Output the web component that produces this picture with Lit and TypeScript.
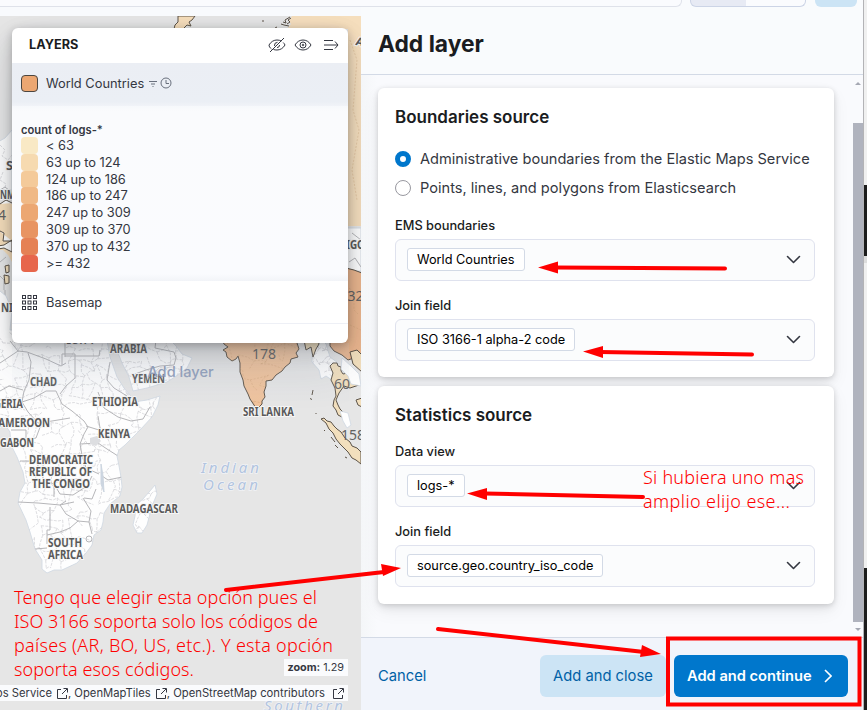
import { LitElement, html, svg, css } from "lit";
import { customElement, property } from "lit/decorators.js";

/* ---------- Map ---------- */

const AFRICA =
  "M-5 290 L0 291 L6 296 L12 310 L10 330 L60 330 L105 330 L110 357 L117 377 L124 388 L130 395 L134 402 L147 400 L160 396 L158 405 L152 417 L140 430 L125 445 L119 450 L117 456 L119 466 L121 477 L122 487 L120 496 L110 504 L104 513 L103 522 L101 530 L94 535 L92 545 L86 553 L77 563 L62 570 L54 570 L47 573 L42 569 L42 560 L35 549 L30 532 L26 520 L18 503 L20 492 L25 483 L23 472 L17 457 L11 445 L10 432 L6 426 L-5 424Z";
const ARABIA =
  "M104 330 L115 345 L122 363 L129 377 L133 391 L147 388 L167 382 L178 375 L187 368 L192 358 L182 354 L176 346 L170 340 L166 330Z";
const MADAGASCAR =
  "M155 485 L157 494 L152 506 L147 525 L142 533 L137 533 L133 525 L135 516 L136 505 L143 499 L150 491Z";
const INDIA =
  "M222 340 L224 344 L228 347 L223 350 L226 352 L227 357 L232 361 L236 359 L238 356 L240 363 L240 372 L243 380 L244 386 L248 394 L250 399 L254 405 L256 408 L258 408 L262 404 L262 401 L265 397 L264 392 L266 386 L266 381 L272 380 L276 375 L282 371 L285 367 L290 363 L291 359 L298 357 L296 353 L299 349 L296 340Z";
const SUMATRA =
  "M321 419 L324 418 L327 421 L331 422 L334 426 L337 429 L341 432 L345 438 L350 442 L352 446 L357 448 L361 452 L361 464 L356 460 L352 458 L348 452 L344 448 L340 444 L336 439 L333 433 L329 429 L326 423Z";
const THAI =
  "M330 366 L333 363 L337 363 L338 366 L341 367 L341 371 L343 374 L348 373 L352 373 L357 379 L359 385 L350 388 L344 386 L339 393 L336 400 L338 405 L340 409 L346 415 L344 418 L338 415 L336 410 L333 406 L334 400 L336 396 L335 388 L331 380 L333 373Z";
const MYANMAR =
  "M306 340 L312 349 L312 362 L319 370 L321 379 L326 376 L332 380 L334 388 L337 384 L332 370 L338 363 L330 357 L326 344 L322 340Z";

/** Faint administrative network: a jittered lattice, the same on every render. */
function lattice(x0: number, y0: number, x1: number, y1: number, step: number): string {
  let seed = 41;
  const rnd = () => ((seed = (seed * 16807) % 2147483647) / 2147483647);
  const cols = Math.ceil((x1 - x0) / step) + 1;
  const rows = Math.ceil((y1 - y0) / step) + 1;
  const pts: number[][][] = [];
  for (let r = 0; r < rows; r++) {
    pts.push([]);
    for (let c = 0; c < cols; c++)
      pts[r].push([x0 + (c + (rnd() - 0.5) * 0.9) * step, y0 + (r + (rnd() - 0.5) * 0.9) * step]);
  }
  let d = "";
  const join = (a: number[], b: number[]) => {
    const mx = (a[0] + b[0]) / 2 + (rnd() - 0.5) * 4;
    const my = (a[1] + b[1]) / 2 + (rnd() - 0.5) * 4;
    d += `M${a[0].toFixed(1)} ${a[1].toFixed(1)}L${mx.toFixed(1)} ${my.toFixed(1)}L${b[0].toFixed(1)} ${b[1].toFixed(1)}`;
  };
  for (let r = 0; r < rows; r++)
    for (let c = 0; c < cols; c++) {
      if (c + 1 < cols && rnd() > 0.35) join(pts[r][c], pts[r][c + 1]);
      if (r + 1 < rows && rnd() > 0.35) join(pts[r][c], pts[r + 1][c]);
    }
  return d;
}

const BORDERS = [
  "M10 341L18 351L27 352L46 359L61 366L66 363",
  "M65 340V357M65 356H99L100 350M62 365V354H75V378L66 386L60 394",
  "M0 363L18 351M28 353L31 362L29 380L24 391L22 402L34 398L46 391L56 391",
  "M56 391L62 404L72 411L84 421L88 427L84 434L80 444",
  "M0 391L9 386L23 390M22 402L28 412L38 423L52 421L70 418",
  "M110 362L107 380L114 388L127 396M98 392L104 408L118 417L131 421L143 419L150 407",
  "M98 416L100 428L99 440M86 426L99 430M11 430H26V440L36 438L42 422",
  "M80 444L98 443L107 449L118 456M80 444L82 455L86 468L99 474",
  "M20 461H36L44 480L54 484V497M18 502L38 503L60 505L74 502",
  "M54 484L60 494L73 495L87 486L92 476M102 476L108 480L122 477",
  "M50 507V530H47V544M60 505L66 514L78 521L89 522L91 511L83 498",
  "M89 522L92 534M47 535L60 532L70 528L78 521M35 549L47 548",
  "M96 489L92 499L84 498M60 505L66 501",
  "M120 349L122 343L136 341M135 374L146 370L160 366L174 365",
  "M156 340L155 348L174 352L176 358L174 365",
];

const LABELS: [string, number, number, number][] = [
  ["ARABIA", 110, 353, 37],
  ["CHAD", 30, 386, 27],
  ["YEMEN", 132, 383, 33],
  ["ETHIOPIA", 92, 406, 46],
  ["GERIA", -6, 408, 29],
  ["CAMEROON", -8, 427, 58],
  ["GABON", 0, 447, 34],
  ["KENYA", 98, 438, 32],
  ["DEMOCRATIC", 29, 464, 64],
  ["REPUBLIC OF", 29, 476, 63],
  ["THE CONGO", 32, 488, 58],
  ["MADAGASCAR", 110, 513, 68],
  ["SOUTH", 48, 547, 34],
  ["AFRICA", 48, 559, 35],
  ["SRI LANKA", 243, 416, 51],
  ["NM", 0, 199, 15],
  ["NI", 1, 312, 12],
  ["S", 6, 170, 7],
  ["IGO", 346, 249, 19],
  ["EGYPT", 66, 344, 29],
];

@customElement("world-map")
class WorldMap extends LitElement {
  static styles = css`
    :host { display: block; height: 100%; background: #e6e6e6; overflow: hidden; }
    svg { display: block; width: 361px; height: 694px; }
    .land { fill: #fefefe; stroke: #cfd8e2; stroke-width: 0.8; }
    .admin { fill: none; stroke: #d6d6d9; stroke-width: 0.8; stroke-dasharray: 3 1.2; }
    .border { fill: none; stroke: #b6b6b9; stroke-width: 1; stroke-linejoin: round; }
    .data { stroke: #5c5348; stroke-width: 1; stroke-linejoin: round; }
    .inner { fill: none; stroke: #c99d73; stroke-width: 0.7; stroke-dasharray: 2 1.5; opacity: 0.5; }
    .pale { fill: #f2dfbd; }
    .sand { fill: #f6debb; }
    .warm { fill: #f0c39c; }
    .hot { fill: #ebb68e; }
    .label { font: 700 11.5px "Noto Sans", sans-serif; fill: #5a5a5a; stroke: #f7f7f7; stroke-width: 2; paint-order: stroke; }
    .ocean { font: italic 15px "Noto Sans", sans-serif; fill: #b2c4df; stroke: #f1f3f6; stroke-width: 1.6; paint-order: stroke; }
    .count { font: 14px "Noto Sans", sans-serif; fill: #626262; }
  `;
  render() {
    const net = lattice(-4, 330, 200, 580, 9.5);
    return html`<svg viewBox="0 16 361 694">
      <defs>
        <clipPath id="af"><path d=${AFRICA} /><path d=${ARABIA} /><path d=${MADAGASCAR} /></clipPath>
        <clipPath id="ind"><path d=${INDIA} /></clipPath>
        <clipPath id="mya"><path d=${MYANMAR} /></clipPath>
      </defs>
      <path class="land" d="M-2 142L5 138L12 130V190H-2Z" />
      <path class="admin" d="M0 145L5 150L2 156L8 160L12 155M3 172L0 180L6 184L4 192" />
      <path class="sand" d="M-2 205L5 201L12 204V262L8 255L3 250L-2 250Z" />
      <path class="border" d="M0 190L5 187L10 191M0 276L4 280V290M5 290V298M0 262L6 257" />
      <path class="data land" d="M-2 246L4 245L12 240V252L4 248L-2 249M0 204L6 200L12 203M-2 230L4 233L3 241L12 241" />
      <path class="data pale" d="M5 266L9 265V272L6 273ZM4 275L9 276V283L5 284Z" />

      <path class="land" d=${AFRICA} /><path class="land" d=${ARABIA} /><path class="land" d=${MADAGASCAR} />
      <g clip-path="url(#af)">
        <path class="admin" d=${net} />
        ${BORDERS.map((d) => svg`<path class="border" d=${d} />`)}
      </g>
      <path d="M90 438L97 436L101 441L96 446L90 444Z" fill="#dddee1" />
      <path d="M101 464L103 476L104 492L101 484Z" fill="#ccd5e0" stroke="#ccd5e0" />
      <circle class="border" cx="89" cy="539" r="3" />

      <path class="data sand" d="M174 29L175 25L178 22L178 16H195L192 20L189 22L191 26L187 25L183 29Z" />
      <path fill="#f6dfbe" d="M292 16H361V226H348V29H287L291 24L289 21Z" />
      <path class="data" fill="none" d="M263 20V22M275 28L277 27M283 22L286 23L285 20L290 17M287 24L290 22L288 20L291 18M281 24L284 25L289 26" />
      <path class="inner" d="M350 40L357 60L353 110L359 130L352 170L357 200" />
      <path class="land" d="M347 228H361V271H347Z" />
      <path class="border" d="M352 233L361 240M349 262L355 258L361 267" />
      <path class="data hot" d="M330 340V346L334 351L342 355L348 360L362 355V273L354 270L346 268V340Z" />
      <path class="inner" d="M349 288L354 292V310L359 315M350 325L361 330" />

      <path class="land" d=${MYANMAR} />
      <g clip-path="url(#mya)"><path class="admin" d=${lattice(300, 335, 345, 395, 6)} /></g>
      <path class="data warm" d=${INDIA} />
      <g clip-path="url(#ind)"><path class="inner" d=${lattice(220, 335, 305, 410, 11)} /></g>
      <path class="data pale" d="M304 340L306 350L311 347L313 357L316 349L319 344L318 340Z" />
      <path class="data pale" d=${THAI} />
      <path class="data pale" d="M350 352L357 350L362 355V372L353 364ZM356 400L362 398V407L358 405Z" />
      <path class="land" d="M342 358L351 366L359 374L361 386L351 384L348 376L341 369ZM340 411L348 413L351 425L347 428L343 421Z" />
      <path class="data pale" d=${SUMATRA} />
      <path class="data" fill="none" d="M313 390L312 395M310.500 398L311.500 400M315.500 413L316.500 414M324 430L325 431M331 437L335 442M335 445L338 448M345 457L347 458" />

      ${LABELS.map(
        ([t, x, y, w]) =>
          svg`<text class="label" x=${x} y=${y} textLength=${w} lengthAdjust="spacingAndGlyphs">${t}</text>`,
      )}
      <text class="ocean" x="201" y="473" textLength="58">Indian</text>
      <text class="ocean" x="203" y="490" textLength="55">Ocean</text>
      <text class="ocean" x="264" y="711" textLength="79">Southern</text>
      <text class="count" x="252" y="359" textLength="24">178</text>
      <text class="count" x="334" y="389" textLength="16">60</text>
      <text class="count" x="341" y="440">158</text>
      <text class="count" x="339.500" y="301">432</text>
      <text class="count" x="-2" y="220">4</text>
      <text class="label" x="356" y="46" transform="rotate(15 360 42)">A</text>
    </svg>`;
  }
}

/* ---------- Layers panel ---------- */

const LEGEND: [string, string][] = [
  ["#f9e9c5", "< 63"],
  ["#f6dab0", "63 up to 124"],
  ["#f4ca9a", "124 up to 186"],
  ["#f0b986", "186 up to 247"],
  ["#eca772", "247 up to 309"],
  ["#e89462", "309 up to 370"],
  ["#e58155", "370 up to 432"],
  ["#e7664c", ">= 432"],
];

@customElement("layers-panel")
class LayersPanel extends LitElement {
  static styles = css`
    :host { display: block; width: 336px; height: 315px; border-radius: 6px; background: #fff; overflow: hidden; color: #343741; font: 12.85px Inter, sans-serif; }
    .head { display: flex; align-items: center; height: 35px; padding: 0 9px 2px 17px; box-sizing: border-box; color: #1a1c21; }
    .title { font-size: 12.7px; font-weight: 700; flex: 1; }
    .head svg { margin-left: 8px; }
    .head .last { margin-left: 11px; }
    svg { fill: none; stroke: #343741; display: block; }
    .row { display: flex; align-items: center; height: 43px; padding: 0 0 3px 9px; box-sizing: border-box; background: linear-gradient(#ebeef4, #ebeff5 90%, #f1f3f8); }
    .chip { width: 15px; height: 15px; border: 1px solid #4b4640; border-radius: 4px; background: #eca772; margin-right: 8px; }
    .row .mini { margin-left: 4px; stroke: #69707d; }
    .row .mini + .mini { margin-left: 2px; }
    .list { height: 175px; padding: 17px 0 0 9px; box-sizing: border-box; background: linear-gradient(#f6f8fb, #fafbfd 5px, #fafbfe 168px, #f2f4f8); }
    .caption { font-size: 11.2px; font-weight: 600; height: 14px; line-height: 14px; }
    .item { display: flex; align-items: center; height: 16.85px; gap: 8px; letter-spacing: -0.05px; }
    .sw { width: 17px; height: 17px; border-radius: 4px; }
    .base { display: flex; align-items: center; height: 43px; gap: 9px; padding-left: 10px; box-sizing: border-box; border-bottom: 1px solid #eef0f6; }
  `;
  render() {
    return html`
      <div class="head">
        <span class="title">LAYERS</span>
        <svg width="18" height="16" viewBox="0 0 18 16">
          <path d="M3.500 12C2 10.900 1 9.400 1 8C3 4.500 6 3 9 3Q11.500 3 13.300 4M15.200 5.500Q16.500 6.800 17 8C15 11.500 12 13 9 13Q7 13 5.500 12.500M6.500 9Q6 5.500 9.500 5.300M9 10.600Q11.500 10.500 11.600 8M16 1L2 15" />
        </svg>
        <svg width="18" height="16" viewBox="0 0 18 16">
          <path d="M1 8C3 4.500 6 3 9 3S15 4.500 17 8C15 11.500 12 13 9 13S3 11.500 1 8Z" />
          <circle cx="9" cy="8" r="3" /><circle cx="9" cy="8" r="0.800" />
        </svg>
        <svg class="last" width="16" height="16" viewBox="0 0 16 16">
          <path d="M1 3.500H10M1 8H15M1 12.500H10M12 4.500L15 8L12 11.500" />
        </svg>
      </div>
      <div class="row">
        <span class="chip"></span><span>World Countries</span>
        <svg class="mini" width="10" height="10" viewBox="0 0 10 10"><path d="M1 3.500H9M3 6H7M4.500 8.500H5.500" /></svg>
        <svg class="mini" width="12" height="12" viewBox="0 0 12 12"><circle cx="6" cy="6" r="5" /><path d="M6 3V6.500H9" /></svg>
      </div>
      <div class="list">
        <div class="caption">count of logs-*</div>
        ${LEGEND.map(
          ([c, t]) => html`<div class="item"><span class="sw" style="background:${c}"></span><span>${t}</span></div>`,
        )}
      </div>
      <div class="base">
        <svg width="15" height="15" viewBox="0 0 15 15">
          ${[0, 5.5, 11].map((x) =>
            [0, 5.5, 11].map((y) => svg`<rect x=${x + 0.5} y=${y + 0.5} width="3" height="3" />`),
          )}
        </svg>
        <span>Basemap</span>
      </div>
    `;
  }
}

/* ---------- Form pieces ---------- */

@customElement("combo-field")
class ComboField extends LitElement {
  @property() label = "";
  @property() value = "";
  static styles = css`
    :host { display: block; font: 13px Inter, sans-serif; color: #1a1c21; }
    .label { height: 18px; line-height: 18px; font-weight: 500; margin-bottom: 4px; font-size: 12.8px; }
    .box { display: flex; align-items: center; justify-content: space-between; width: 420px; height: 42px; box-sizing: border-box; padding: 0 13px 1px 11px; border: 1px solid #dfe2ee; border-radius: 6px; background: #fbfcfd; }
    .pill { height: 23px; line-height: 22px; box-sizing: border-box; padding: 0 9px; border: 1px solid #d3dae6; border-radius: 3px; background: #fff; color: #000; white-space: nowrap; font-size: 12.75px; }
    svg { fill: none; stroke: #343741; stroke-width: 1.6; stroke-linecap: round; stroke-linejoin: round; }
  `;
  render() {
    return html`
      <div class="label">${this.label}</div>
      <div class="box">
        <span class="pill">${this.value}</span>
        <svg width="15" height="9" viewBox="0 0 15 9"><path d="M1.500 1.500L7.500 7.500L13.500 1.500" /></svg>
      </div>
    `;
  }
}

@customElement("app-root")
class AppRoot extends LitElement {
  static styles = css`
    :host { display: block; position: relative; width: 867px; height: 710px; overflow: hidden; background: #f8fafd; font-family: Inter, sans-serif; }
    .page { display: grid; grid-template-columns: 361px 502px 4px; height: 710px; }
    .left { display: grid; grid-template-rows: 16px 694px; min-width: 0; }
    .strip { display: flex; height: 7px; }
    .search { box-sizing: border-box; border: solid #dfe2ea; border-width: 0 0 1px; background: #fafbfe; }
    .left .search { width: 361px; }
    .flyout .search { width: 321px; border-right-width: 1px; border-radius: 0 0 6px 0; }
    .group { display: flex; box-sizing: border-box; width: 116px; margin-left: 8px; border: 1px solid #ccd4e6; border-top: 0; border-radius: 0 0 6px 6px; background: linear-gradient(90deg, #e7eaf4 55px, #fafbfe 55px); }
    .save { width: 42px; margin-left: 9px; border-radius: 0 0 6px 6px; background: #cce4f5; }
    .mapwrap { position: relative; overflow: hidden; }
    layers-panel { position: absolute; left: 12px; top: 12px; box-shadow: 0 2px 8px rgba(0,0,0,.22), 0 8px 22px rgba(0,0,0,.13), 0 20px 50px rgba(30,45,70,.13); }
    .ghost { position: absolute; left: 12px; top: 327px; width: 337px; height: 58px; line-height: 58px; text-align: center; font-size: 14.6px; font-weight: 500; color: #98a5c0; background: linear-gradient(rgba(211,218,230,.12), rgba(211,218,230,.06)); }
    .zoom { position: absolute; right: 13px; bottom: 34px; height: 17px; line-height: 17px; padding: 0 4px 0 4px; background: #fafbfd; font-size: 10.8px; color: #343741; }
    .credit { position: absolute; right: 13px; bottom: 9px; height: 16px; display: flex; align-items: center; padding-right: 4px; background: #fafbfd; color: #343741; font-size: 11.25px; white-space: pre; }
    .credit svg { margin-left: 5px; fill: none; stroke: #343741; }
    .flyout { display: grid; grid-template-rows: 75px 562px 73px; background: #f9fbfd; box-sizing: border-box; min-width: 0; }
    header { border-bottom: 1px solid #d3dae6; box-sizing: border-box; }
    h1 { margin: 21px 0 0 17px; font-size: 22.8px; line-height: 31px; font-weight: 700; color: #1a1c21; }
    .body { display: flex; overflow: hidden; background: linear-gradient(90deg, #f4f6f8, #f9fafd 16px); }
    .cards { width: 456px; display: flex; flex-direction: column; gap: 9px; padding: 13px 19px 0 17px; }
    .card { box-sizing: border-box; flex: none; padding: 17px 17px 0; border-radius: 6px; background: #fff; box-shadow: 0 1px 5px rgba(0,0,0,.12), 0 4px 8px rgba(0,0,0,.07), 0 7px 18px rgba(0,0,0,.06); }
    .card.first { height: 289px; }
    .card.second { height: 218px; }
    h2 { margin: 0; font-size: 17px; line-height: 24px; font-weight: 600; color: #1a1c21; }
    .radio { display: flex; align-items: center; height: 29px; gap: 9px; font-size: 14.6px; font-weight: 400; color: #343741; white-space: nowrap; }
    .radios { margin: 15px 0; }
    .dot { box-sizing: border-box; flex: none; width: 16px; height: 16px; border-radius: 50%; border: 1px solid #98989f; background: #fff; }
    .dot.on { border: 5px solid #0077cc; }
    combo-field + combo-field { margin-top: 16px; }
    .second h2 { margin-bottom: 16px; }
    .bar { width: 10px; flex: none; display: flex; flex-direction: column; align-items: center; }
    .thumb { flex: none; width: 10px; height: 499px; margin: 38px 0 6px; background: #b0b3be; }
    .bar svg { flex: none; fill: #a5a8b3; }
    .bar .up { margin-top: 7px; }
    footer { display: flex; align-items: center; box-sizing: border-box; border-top: 1px solid #d3dae6; background: #f1f4fb; padding: 4px 15px 0 17px; font-size: 14.75px; color: #0061a6; }
    .cancel { flex: 1; }
    .btn { display: flex; align-items: center; box-sizing: border-box; height: 42px; border-radius: 6px; white-space: nowrap; }
    .close { width: 126px; padding-left: 13px; background: #cce4f5; }
    .next { width: 174px; margin-left: 8px; padding-left: 13px; background: #0077cc; color: #fff; font-weight: 600; font-size: 14.65px; }
    .next svg { margin-left: 12px; fill: none; stroke: #fff; stroke-width: 1.6; }
    .edge { display: grid; grid-template-rows: 185px 71px 7px 305px 142px; border-left: 1px solid #b3b3b6; }
    .white { background: #f0f0f0; } .gray { background: #ddd; } .black { background: #1d1d1d; }
    .notes { position: absolute; inset: 0; width: 867px; height: 710px; }
    .notes text { font: 300 18px "Noto Sans", sans-serif; fill: #f00; }
    .shaft { fill: none; stroke: #f00; stroke-width: 4; stroke-linecap: round; }
    .tip { fill: #f00; }
    .frame { fill: none; stroke: #f00; stroke-width: 4; }
  `;

  private external() {
    return html`<svg width="11" height="11" viewBox="0 0 11 11"><path d="M4 1.500H0.500V10.500H9.500V7M6.500 0.500H10.500V4.500M10 1L5 6" /></svg>`;
  }

  render() {
    return html`
      <div class="page">
        <section class="left">
          <div class="strip"><div class="search"></div></div>
          <div class="mapwrap">
            <world-map></world-map>
            <div class="ghost">Add layer</div>
            <layers-panel></layers-panel>
            <div class="zoom"><b>zoom:</b> 1.29</div>
            <div class="credit">Elastic Maps Service${this.external()}, OpenMapTiles${this.external()}, OpenStreetMap contributors ${this.external()}</div>
          </div>
        </section>
        <section class="flyout">
          <header>
            <div class="strip"><div class="search"></div><div class="group"></div><div class="save"></div></div>
            <h1>Add layer</h1>
          </header>
          <div class="body">
            <div class="cards">
              <div class="card first">
                <h2>Boundaries source</h2>
                <div class="radios">
                  <div class="radio"><span class="dot on"></span>Administrative boundaries from the Elastic Maps Service</div>
                  <div class="radio"><span class="dot"></span>Points, lines, and polygons from Elasticsearch</div>
                </div>
                <combo-field label="EMS boundaries" value="World Countries"></combo-field>
                <combo-field label="Join field" value="ISO 3166-1 alpha-2 code"></combo-field>
              </div>
              <div class="card second">
                <h2>Statistics source</h2>
                <combo-field label="Data view" value="logs-*"></combo-field>
                <combo-field label="Join field" value="source.geo.country_iso_code"></combo-field>
              </div>
            </div>
            <div class="bar">
              <svg class="up" width="6" height="3" viewBox="0 0 6 3"><path d="M0 3L3 0L6 3Z" /></svg>
              <div class="thumb"></div>
              <svg width="6" height="3" viewBox="0 0 6 3"><path d="M0 0L3 3L6 0Z" /></svg>
            </div>
          </div>
          <footer>
            <span class="cancel">Cancel</span>
            <span class="btn close">Add and close</span>
            <span class="btn next">Add and continue<svg width="8" height="14" viewBox="0 0 8 14"><path d="M1 1L7 7L1 13" /></svg></span>
          </footer>
        </section>
        <div class="edge">
          <i class="white"></i><i class="black"></i><i class="gray"></i><i class="white"></i><i class="black"></i>
        </div>
      </div>
      <svg class="notes" viewBox="0 0 867 710">
        <path class="shaft" d="M725 268.500L555 267.500M752 354.500L600 352M643 497L485 493.500M226 590L384 572M438 629L644 652" />
        <path class="tip" d="M538 267.500L558 261.500V273.500ZM583 351.500L603 346V358ZM467 493.500L487 488V500ZM401 568L381 564L383 576ZM661 654L642 645L640 657Z" />
        <rect class="frame" x="668" y="638.500" width="191.500" height="66" />
        <text x="14" y="604" textLength="303">Tengo que elegir esta opción pues el</text>
        <text x="14" y="628" textLength="304">ISO 3166 soporta solo los códigos de</text>
        <text x="14" y="652" textLength="319">países (AR, BO, US, etc.). Y esta opción</text>
        <text x="14" y="676" textLength="180">soporta esos códigos.</text>
        <text x="643" y="484" textLength="161">Si hubiera uno mas</text>
        <text x="643" y="508" textLength="147">amplio elijo ese...</text>
      </svg>
    `;
  }
}
